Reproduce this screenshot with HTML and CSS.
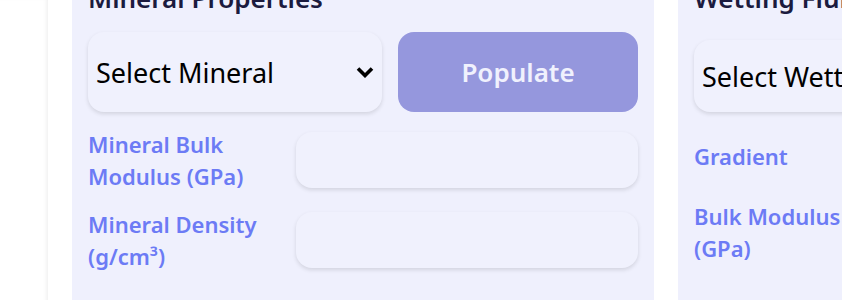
FILE: index.html
```html
<!DOCTYPE html>
<html lang="en">
<head>
 <meta charset="UTF-8">
 <meta name="viewport" content="width=device-width, initial-scale=1.0">
 <title>Rock Physics</title>
 <link rel="stylesheet" href="styles.css">
</head>
<body>
 <div class="app-container">
  <aside class="side-bar"></aside>

  <main class="app-main">
   <section class="prop-card">
    <h2>Mineral Properties</h2>
    <div class="select-row">
     <div class="select-wrap">
      <select id="mineralSelect">
       <option>Select Mineral</option>
       <option>Quartz</option>
       <option>Calcite</option>
       <option>Dolomite</option>
      </select>
      <svg class="chevron" viewBox="0 0 18 12" width="18" height="12"><path d="M2 2.5 L9 9.5 L16 2.5" fill="none" stroke="#000" stroke-width="3.6"/></svg>
     </div>
     <button class="populate-btn">Populate</button>
    </div>
    <div class="field-row">
     <label for="minK">Mineral Bulk Modulus (GPa)</label>
     <input type="text" id="minK">
    </div>
    <div class="field-row">
     <label for="minRho">Mineral Density (g/cm³)</label>
     <input type="text" id="minRho">
    </div>
   </section>

   <section class="prop-card fluid-card">
    <h2>Wetting Fluid Properties</h2>
    <div class="select-row">
     <div class="select-wrap">
      <select id="fluidSelect">
       <option>Select Wetting Fluid</option>
       <option>Brine</option>
       <option>Oil</option>
      </select>
      <svg class="chevron" viewBox="0 0 18 12" width="18" height="12"><path d="M2 2.5 L9 9.5 L16 2.5" fill="none" stroke="#000" stroke-width="3.6"/></svg>
     </div>
     <button class="populate-btn">Populate</button>
    </div>
    <div class="field-row">
     <label for="fluidGrad">Gradient</label>
     <input type="text" id="fluidGrad">
    </div>
    <div class="field-row">
     <label for="fluidK">Bulk Modulus (GPa)</label>
     <input type="text" id="fluidK">
    </div>
    <div class="field-row">
     <label for="fluidRho">Density (g/cm³)</label>
     <input type="text" id="fluidRho">
    </div>
   </section>
  </main>
 </div>
</body>
</html>
```

FILE: styles.css
```css
body {
 font-family: "Noto Sans", sans-serif;
 margin: 0;
 background-color: #fff;
 color: #1b1b3f;
 overflow: hidden;
}

.app-container {
 display: flex;
 min-height: 100vh;
}

.side-bar {
 flex: 0 0 48px;
 background-color: #fff;
 box-shadow: inset -4px 0 4px -3px rgba(0, 0, 0, 0.08);
}

.app-main {
 display: flex;
 align-items: flex-start;
 gap: 24px;
 padding: 0 24px;
 margin-top: -36px;
}

.prop-card {
 flex: 0 0 582px;
 box-sizing: border-box;
 background-color: #eff0fd;
 padding: 16px 16px 32px;
 min-height: 360px;
}

.prop-card h2 {
 margin: 0 0 16px;
 font-size: 26px;
 line-height: 36px;
 font-weight: 600;
}

.fluid-card h2 {
 margin-bottom: 24px;
}

.select-row {
 display: flex;
 gap: 16px;
 margin-bottom: 16px;
}

.select-wrap {
 position: relative;
 flex: 0 0 294px;
}

.select-wrap select {
 width: 100%;
 height: 100%;
 min-height: 72px;
 appearance: none;
 border: none;
 border-radius: 16px;
 background-color: #f0f1fd;
 box-shadow: 0 2px 4px rgba(0, 0, 0, 0.12);
 padding: 0 8px;
 font-family: inherit;
 font-size: 27px;
 color: #000;
}

.chevron {
 position: absolute;
 right: 8px;
 top: 50%;
 margin-top: -6px;
 pointer-events: none;
}

.populate-btn {
 flex: 0 0 240px;
 height: 80px;
 border: none;
 border-radius: 16px;
 background-color: #9597dd;
 color: #f0f1fd;
 font-family: inherit;
 font-size: 26px;
 font-weight: 600;
 cursor: pointer;
}

.fluid-card .populate-btn {
 height: 72px;
}

.field-row {
 display: flex;
 align-items: center;
 gap: 16px;
 margin-bottom: 16px;
}

.field-row label {
 flex: 0 0 192px;
 color: #6c7bf5;
 font-size: 22px;
 line-height: 32px;
 font-weight: 600;
}

.field-row input {
 flex: 1;
 height: 56px;
 box-sizing: border-box;
 border: none;
 border-radius: 16px;
 background-color: #f0f1fd;
 box-shadow: 0 2px 4px rgba(0, 0, 0, 0.12);
 font-family: inherit;
 font-size: 20px;
 padding: 0 12px;
}
```
